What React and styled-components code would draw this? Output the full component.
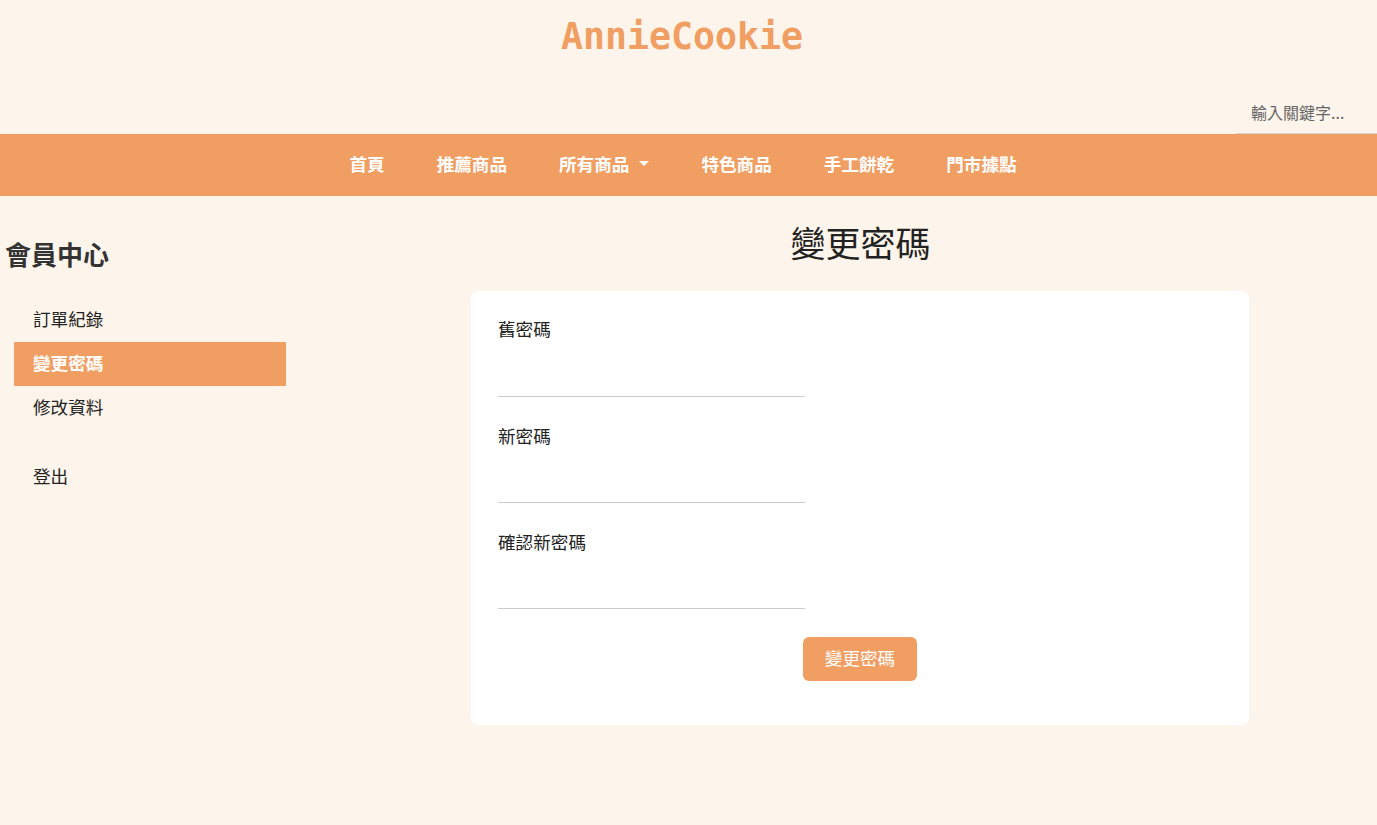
import React from 'react';
import styled, { createGlobalStyle } from 'styled-components';

const ORANGE = '#f09e62';

const GlobalStyle = createGlobalStyle`
	body {
		margin: 0;
		background: #fdf5eb;
		color: #222;
		font-family: 'Noto Sans CJK TC', 'Noto Sans', sans-serif;
		font-size: 17.6px;
	}
	* {
		box-sizing: border-box;
	}
`;

const Header = styled.header`
	height: 134px;
	display: flex;
	flex-direction: column;
`;

const Logo = styled.h1`
	margin: 10px 13px 0 0;
	text-align: center;
	font-family: 'DejaVu Sans Mono', 'Liberation Mono', monospace;
	font-size: 36.6px;
	line-height: 54px;
	font-weight: bold;
	color: ${ORANGE};
`;

const SearchRow = styled.div`
	margin-top: auto;
	display: flex;
	justify-content: flex-end;
`;

const Search = styled.input`
	width: 141px;
	height: 37px;
	padding: 0 15px 6px;
	border: none;
	border-bottom: 1px solid #d6d2cd;
	background: transparent;
	font-family: inherit;
	font-size: 16px;
	outline: none;
	&::placeholder {
		color: #666;
	}
`;

const Nav = styled.nav`
	height: 62px;
	background: ${ORANGE};
	display: flex;
	justify-content: center;
	align-items: center;
	padding: 0 11px 4px 0;
`;

const NavItem = styled.a`
	display: flex;
	align-items: center;
	padding: 0 26px;
	color: #fff;
	font-weight: bold;
	text-decoration: none;
`;

const Caret = styled.span`
	margin-left: 10px;
	width: 0;
	height: 0;
	border-left: 5px solid transparent;
	border-right: 5px solid transparent;
	border-top: 5px solid #fff;
`;

const Main = styled.main`
	display: grid;
	grid-template-columns: 344px 1fr;
`;

const Sidebar = styled.aside`
	padding-left: 5px;
`;

const SideTitle = styled.h2`
	margin: 42px 0 0;
	font-size: 26px;
	line-height: 32px;
	font-weight: bold;
	color: #333;
`;

const SideList = styled.ul`
	list-style: none;
	margin: 28px 0 0 9px;
	padding: 0;
	width: 272px;
`;

const SideItem = styled.li`
	height: 44px;
	display: flex;
	align-items: center;
	padding: 0 0 4px 19px;
	margin-top: ${(p) => (p.$gap ? '25px' : '0')};
	background: ${(p) => (p.$active ? ORANGE : 'transparent')};
	color: ${(p) => (p.$active ? '#fff' : '#222')};
	font-weight: ${(p) => (p.$active ? 'bold' : 'normal')};
`;

const Content = styled.section`
	display: flex;
	flex-direction: column;
	align-items: center;
`;

const PageTitle = styled.h1`
	margin: 24px 0 0;
	font-size: 35px;
	line-height: 44px;
	font-weight: normal;
	color: #222;
`;

const Card = styled.form`
	width: 778px;
	margin: 27px 1px 0 0;
	padding: 25px 27px 44px 27px;
	background: #fff;
	border-radius: 8px;
	display: flex;
	flex-direction: column;
`;

const Label = styled.label`
	display: block;
	line-height: 26px;
	color: #222;
	margin-top: ${(p) => (p.$first ? '0' : '26px')};
`;

const Field = styled.input`
	display: block;
	width: 307px;
	height: 39px;
	margin-top: ${(p) => (p.$first ? '16px' : '15px')};
	border: none;
	border-bottom: 1px solid #ccc;
	outline: none;
	font-size: 16px;
`;

const Button = styled.button`
	align-self: center;
	margin-top: 28px;
	height: 44px;
	padding: 0 22px 3px;
	border: none;
	border-radius: 6px;
	background: ${ORANGE};
	color: #fff;
	font-family: inherit;
	font-size: 17.6px;
`;

const navLinks = ['首頁', '推薦商品', '所有商品', '特色商品', '手工餅乾', '門市據點'];

const App = () => {
	return (
		<>
			<GlobalStyle />
			<Header>
				<Logo>AnnieCookie</Logo>
				<SearchRow>
					<Search placeholder="輸入關鍵字..." />
				</SearchRow>
			</Header>
			<Nav>
				{navLinks.map((l) => (
					<NavItem key={l}>
						{l}
						{l === '所有商品' && <Caret />}
					</NavItem>
				))}
			</Nav>
			<Main>
				<Sidebar>
					<SideTitle>會員中心</SideTitle>
					<SideList>
						<SideItem>訂單紀錄</SideItem>
						<SideItem $active>變更密碼</SideItem>
						<SideItem>修改資料</SideItem>
						<SideItem $gap>登出</SideItem>
					</SideList>
				</Sidebar>
				<Content>
					<PageTitle>變更密碼</PageTitle>
					<Card onSubmit={(e) => e.preventDefault()}>
						<Label $first>舊密碼</Label>
						<Field type="password" $first />
						<Label>新密碼</Label>
						<Field type="password" />
						<Label>確認新密碼</Label>
						<Field type="password" />
						<Button type="submit">變更密碼</Button>
					</Card>
				</Content>
			</Main>
		</>
	);
};

export default App;
